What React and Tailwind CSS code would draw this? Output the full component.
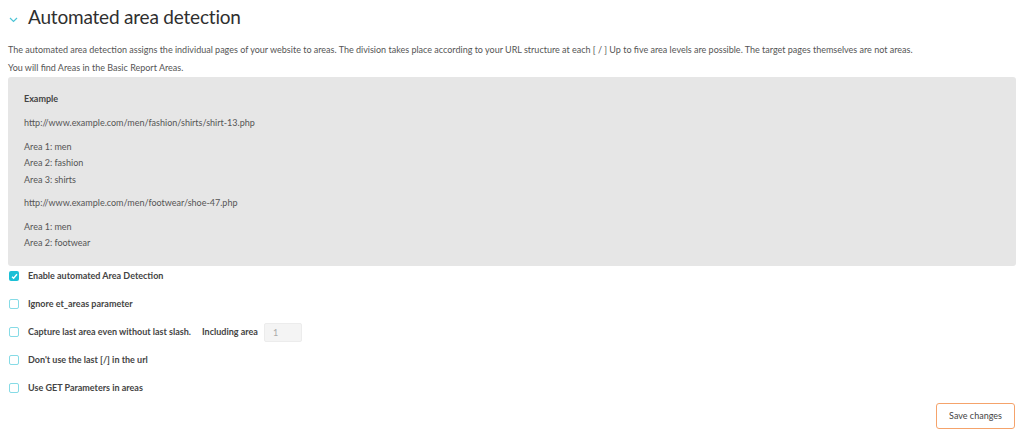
export default function App() {
  const options = [
    { label: "Enable automated Area Detection", checked: true },
    { label: "Ignore et_areas parameter", checked: false },
    { label: "Capture last area even without last slash.", checked: false, extra: true },
    { label: "Don't use the last [/] in the url", checked: false },
    { label: "Use GET Parameters in areas", checked: false },
  ];

  return (
    <div className="w-[1024px] h-[435px] bg-white font-['Lato',sans-serif] text-[#555] overflow-hidden">
      {/* header */}
      <div className="flex items-center h-[34px] pl-[9px]">
        <svg className="w-[9px] h-[6px] mr-[10px] mt-[5px]" viewBox="0 0 9 6" fill="none">
          <path d="M1 1l3.5 3.5L8 1" stroke="#4cc4d6" strokeWidth="1.2" />
        </svg>
        <h2 className="text-[19px] text-[#2f2f2f] tracking-[-0.2px]">Automated area detection</h2>
      </div>

      <div className="px-[8px] text-[9px]">
        <p className="mt-[7px] leading-[18px]">
          The automated area detection assigns the individual pages of your website to areas. The division takes place according to your URL structure at each [ / ] Up to five area levels are possible. The target pages themselves are not areas.
        </p>
        <p className="leading-[18px]">You will find Areas in the Basic Report Areas.</p>

        {/* example box */}
        <div className="h-[189px] bg-[#e6e6e6] rounded-[3px] px-[16px] pt-[14px]">
          <div className="font-bold text-[#444] leading-[16px]">Example</div>
          <div className="mt-[8px] leading-[16px]">http://www.example.com/men/fashion/shirts/shirt-13.php</div>
          <div className="mt-[7.5px] leading-[16.5px]">
            <div>Area 1: men</div>
            <div>Area 2: fashion</div>
            <div>Area 3: shirts</div>
          </div>
          <div className="mt-[6.5px] leading-[16px]">http://www.example.com/men/footwear/shoe-47.php</div>
          <div className="mt-[8px] leading-[16.5px]">
            <div>Area 1: men</div>
            <div>Area 2: footwear</div>
          </div>
        </div>

        {/* options */}
        <div className="flex flex-col gap-[8px] mt-[0px] pl-[1px]">
          {options.map((o, i) => (
            <div key={i} className="flex items-center h-[20px]">
              {o.checked ? (
                <span className="w-[10px] h-[10px] rounded-[2px] bg-[#1cc0d6] flex items-center justify-center">
                  <svg className="w-[7px] h-[7px]" viewBox="0 0 8 8" fill="none">
                    <path d="M1.2 4.2l1.8 1.8L6.8 1.5" stroke="white" strokeWidth="1.6" />
                  </svg>
                </span>
              ) : (
                <span className="w-[10px] h-[10px] rounded-[2px] border border-[#86dbe6] bg-white" />
              )}
              <span className="ml-[9px] font-bold text-[#444]">{o.label}</span>
              {o.extra && (
                <>
                  <span className="ml-[11px] font-bold text-[#444]">Including area</span>
                  <span className="ml-[6px] w-[38px] h-[19px] bg-[#f4f4f4] border border-[#ececec] rounded-[2px] text-[#aaa] pl-[8px] leading-[17px]">1</span>
                </>
              )}
            </div>
          ))}
        </div>

        <div className="flex justify-end mt-[5px] pr-[1px]">
          <button className="w-[79px] h-[26px] border border-[#f5a36b] rounded-[3px] bg-white text-[9px] text-[#444]">
            Save changes
          </button>
        </div>
      </div>
    </div>
  );
}
